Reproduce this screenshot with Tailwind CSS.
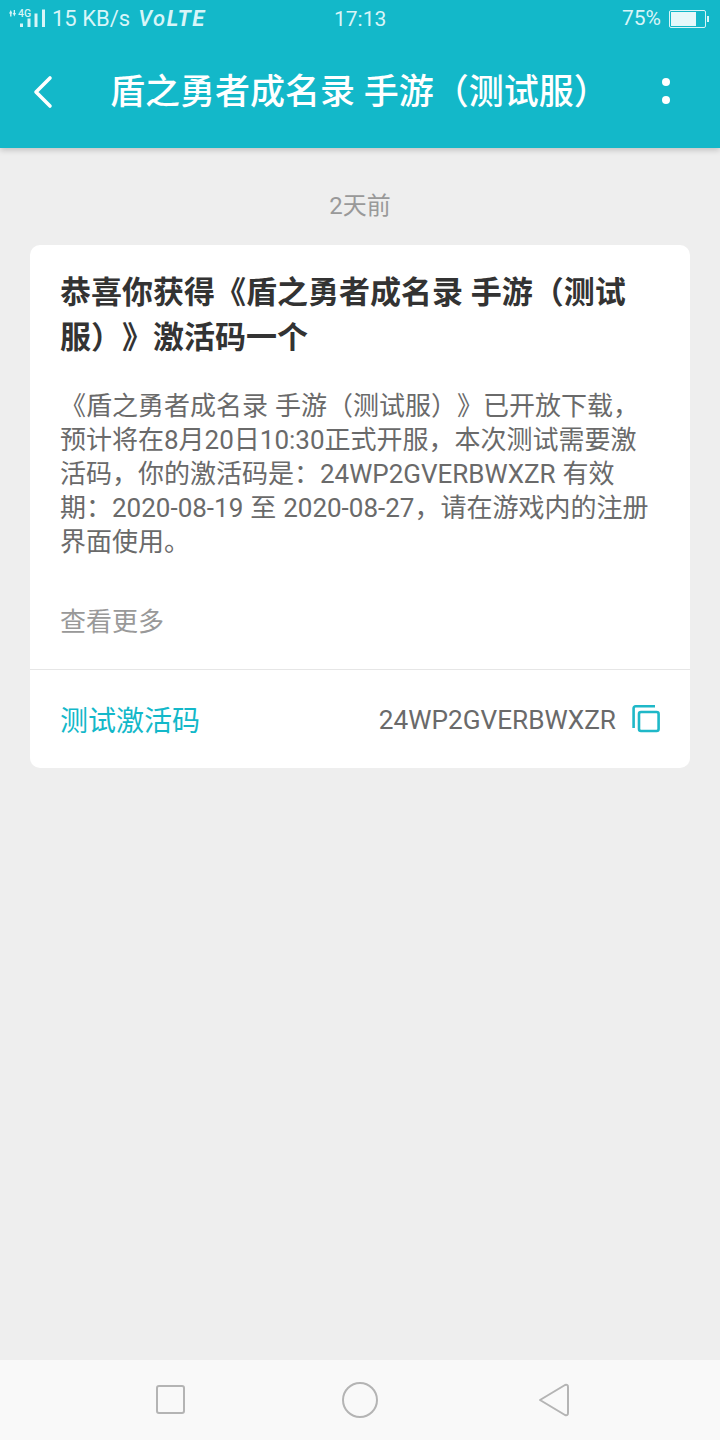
<!DOCTYPE html>
<html lang="zh-CN">
<head>
  <meta charset="UTF-8" />
  <meta name="viewport" content="width=device-width, initial-scale=1.0"/>
  <title>消息详情</title>
  <script src="https://cdn.jsdelivr.net/npm/@tailwindcss/browser@4"></script>
</head>
<body class="bg-[#eeeeee] font-['Roboto','Noto_Sans_CJK_SC',sans-serif] text-[#6a6a6a] [text-spacing-trim:space-all]">
<div class="w-[720px] h-[1440px] flex flex-col overflow-hidden">

  <!-- Header with status bar -->
  <div class="h-[148px] shrink-0 bg-[#13b8c9] shadow-[0_2px_6px_rgba(0,0,0,0.2)] relative z-10 text-white">
    <div class="h-[37px] flex items-center pl-[9px] pr-[11px] relative text-[#d8f5f8]">
      <div class="flex items-center w-[43px] h-[24px]">
        <svg width="38" height="24" viewBox="0 0 38 24" fill="#d8f5f8">
          <rect x="11" y="16.500" width="3" height="3.500"/>
          <rect x="18.500" y="11.500" width="3" height="8.500"/>
          <rect x="25.500" y="6.500" width="3" height="13.500"/>
          <rect x="33" y="2.500" width="3" height="17.500"/>
          <path d="M0 6.500L1.800 3L3.400 6.500H2.500V9.500H1.100V6.500zM3.800 6H4.700V3H6V6H7L5.300 9.500z"/>
          <text x="9" y="9.500" font-size="10.500" font-weight="500" font-family="Roboto">4G</text>
        </svg>
      </div>
      <span class="text-[22px] leading-none">15 KB/s</span>
      <span class="text-[22px] leading-none italic font-medium tracking-[1.6px] ml-[8px]">Vo<b class="font-bold">LTE</b></span>
      <span class="absolute left-[334px] top-[8px] text-[21px] leading-[22px]">17:13</span>
      <div class="ml-auto flex items-center gap-[8px]">
        <span class="text-[21px] leading-none">75%</span>
        <div class="flex items-center">
          <div class="w-[37px] h-[18px] border border-[#d8f5f8] p-[1px] rounded-[2px]">
            <div class="w-[25px] h-full bg-[#e6f8fa]"></div>
          </div>
          <div class="w-[2px] h-[6px] bg-[#d8f5f8] ml-[1px]"></div>
        </div>
      </div>
    </div>
    <div class="h-[111px] flex items-center relative">
      <svg class="absolute left-[32px] top-[36px]" width="22" height="38" viewBox="0 0 22 38" fill="none" stroke="#ffffff" stroke-width="3.600" stroke-linecap="round" stroke-linejoin="round"><path d="M18 5L4 19L18 33"/></svg>
      <h1 class="absolute left-[110px] top-[33px] text-[35px] leading-[46px] font-medium whitespace-nowrap">盾之勇者成名录 手游（测试服）</h1>
      <div class="absolute left-[662px] top-[41px] flex flex-col gap-[10px]">
        <div class="w-[8px] h-[8px] rounded-full bg-white"></div>
        <div class="w-[8px] h-[8px] rounded-full bg-white"></div>
      </div>
    </div>
  </div>

  <!-- Content -->
  <div class="flex-1 px-[30px]">
    <div class="text-center text-[24px] leading-[34px] text-[#999999] mt-[41px]">2天前</div>
    <div class="bg-white rounded-[10px] mt-[22px]">
      <div class="pl-[30px] pr-[31px] pt-[25px] pb-[30px] border-b border-[#e6e6e6]">
        <h2 class="text-[31px] leading-[45px] font-bold text-[#333333]">恭喜你获得《盾之勇者成名录 手游（测试服）》激活码一个</h2>
        <p class="text-[26px] leading-[34px] [word-spacing:0.5px] mt-[29px]">《盾之勇者成名录 手游（测试服）》已开放下载，预计将在8月20日10:30正式开服，本次测试需要激活码，你的激活码是：24WP2GVERBWXZR 有效期：2020-08-19 至 2020-08-27，请在游戏内的注册界面使用。</p>
        <div class="text-[26px] leading-[34px] text-[#999999] mt-[46px]">查看更多</div>
      </div>
      <div class="h-[98px] pl-[30px] pr-[29px] flex items-center">
        <span class="text-[28px] text-[#13b8c9] mt-[5px]">测试激活码</span>
        <span class="ml-auto text-[26.200px] mt-[4px]">24WP2GVERBWXZR</span>
        <svg class="ml-[15px]" width="30" height="30" viewBox="0 0 30 30" fill="none" stroke="#1fb8c8" stroke-width="2.600"><path d="M2.600 24V4.300a2 2 0 0 1 2-2H24"/><rect x="8" y="8" width="19.600" height="19" rx="2"/></svg>
      </div>
    </div>
  </div>

  <!-- Navigation bar -->
  <div class="h-[80px] shrink-0 bg-[#f9f9f9] relative">
    <svg class="absolute left-[155px] top-[24px]" width="30" height="31" viewBox="0 0 30 31" fill="none" stroke="#b4b4b4" stroke-width="2"><rect x="2" y="2" width="27" height="27" rx="2"/></svg>
    <svg class="absolute left-[342px] top-[22px]" width="36" height="36" viewBox="0 0 36 36" fill="none" stroke="#b4b4b4" stroke-width="2"><circle cx="18" cy="18" r="17"/></svg>
    <svg class="absolute left-[538px] top-[22px]" width="32" height="36" viewBox="0 0 32 36" fill="none" stroke="#b4b4b4" stroke-width="2" stroke-linejoin="round"><path d="M2 18L27 3q3-1 3 2v26q0 3-3 2z"/></svg>
  </div>
</div>
</body>
</html>
